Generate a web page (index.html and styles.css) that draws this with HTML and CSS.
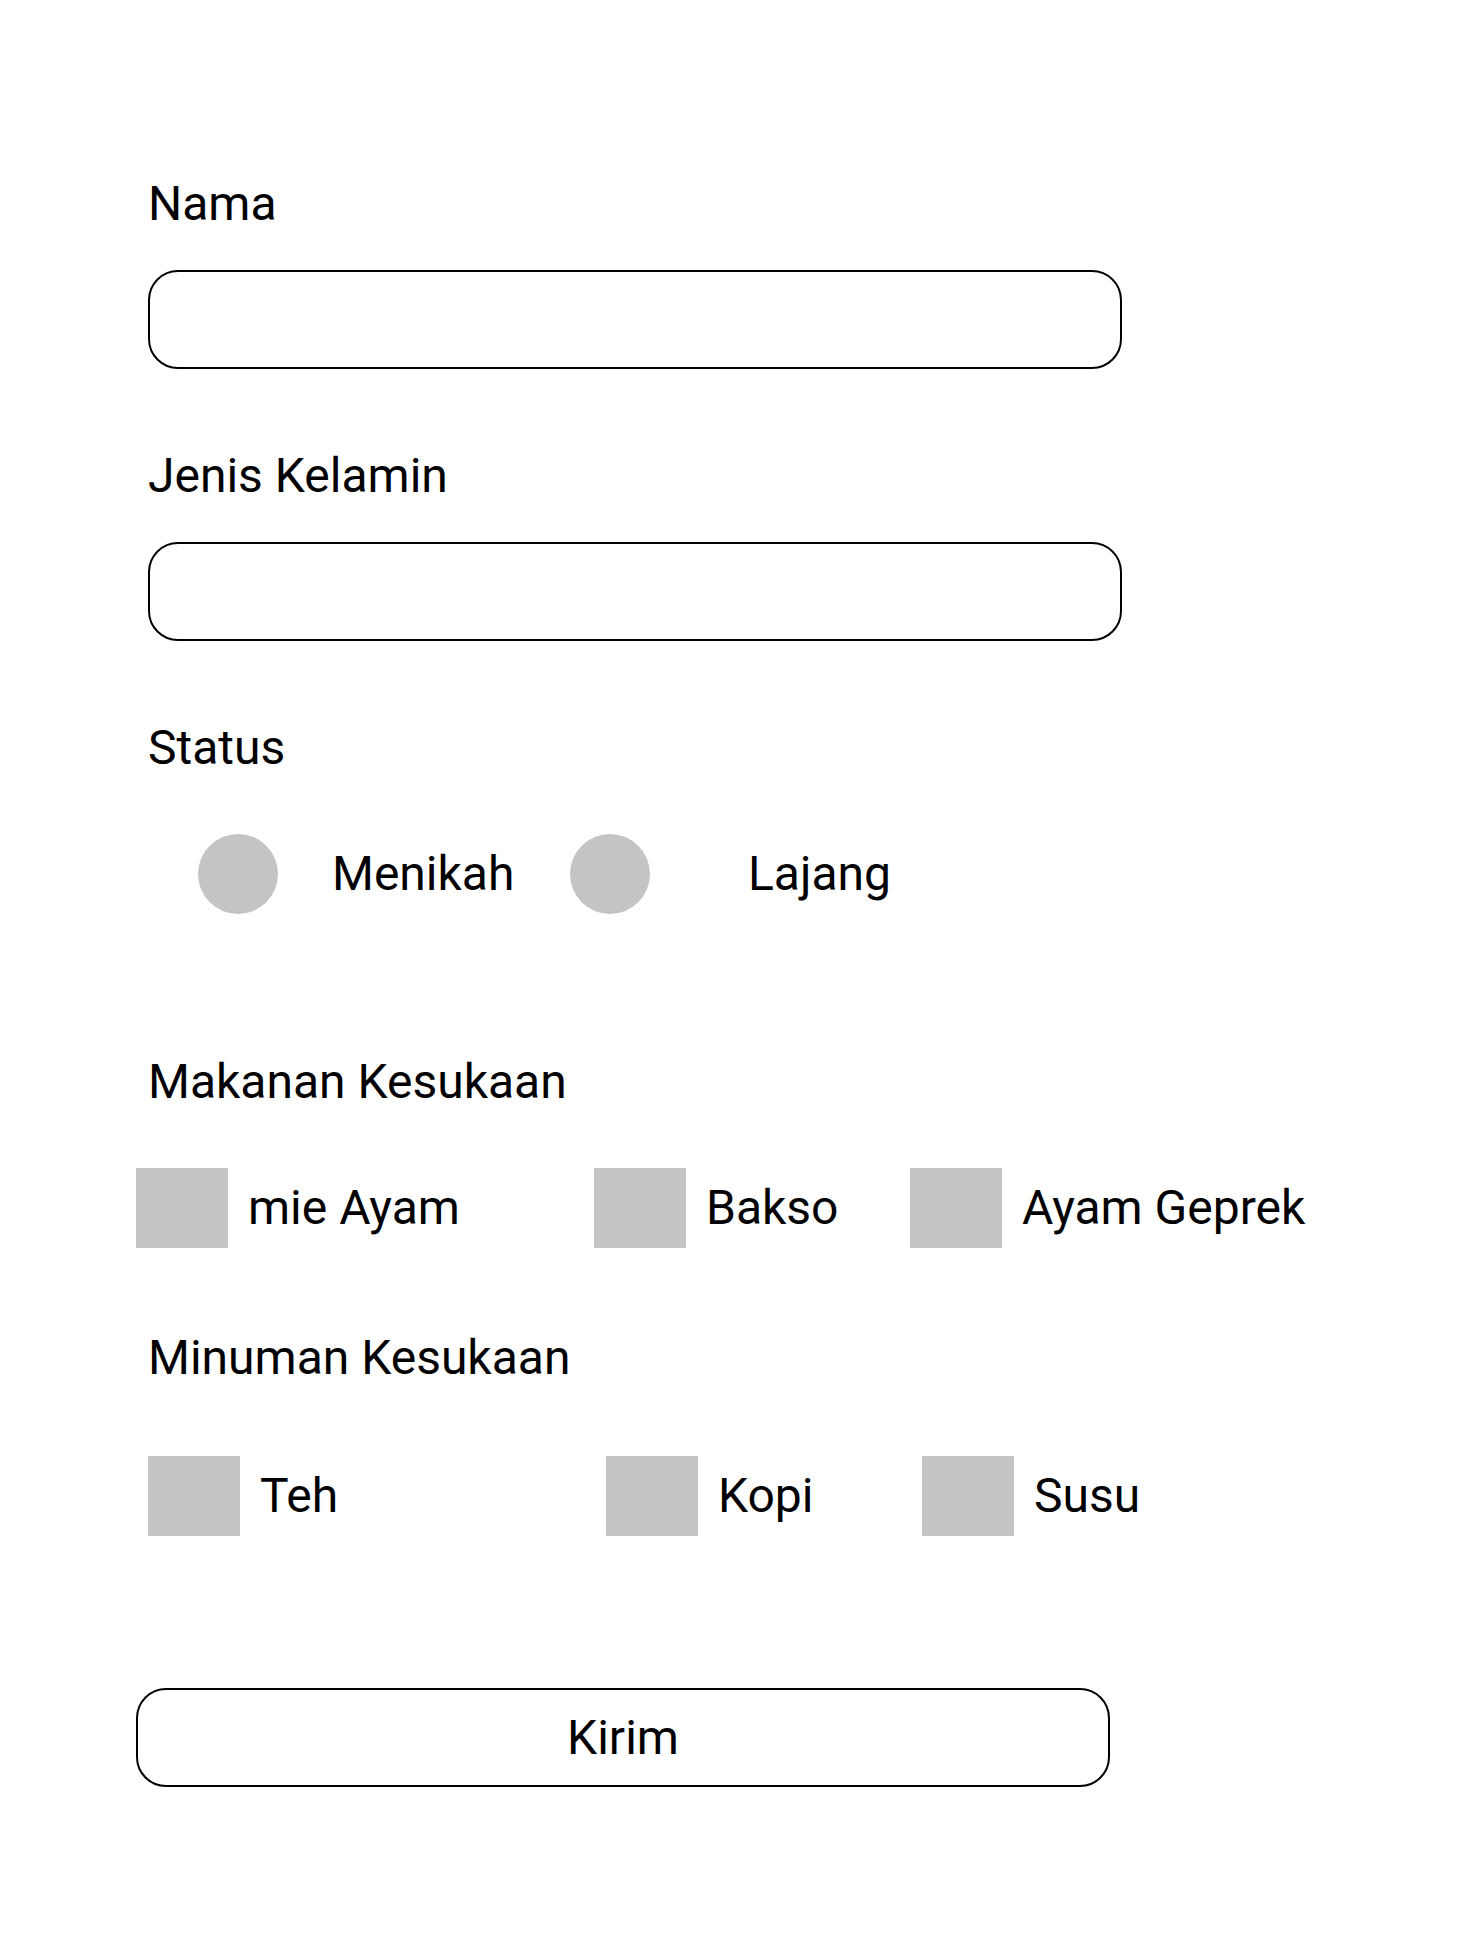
FILE: index.html
```html
<!DOCTYPE html>
<html lang="id">
<head>
<meta charset="utf-8">
<title>Form</title>
<link rel="stylesheet" href="styles.css">
</head>
<body>
<form class="form">
  <div class="label label-first">Nama</div>
  <div class="field"></div>

  <div class="label label-gap">Jenis Kelamin</div>
  <div class="field"></div>

  <div class="label label-gap">Status</div>
  <div class="radio-row">
    <div class="radio-item radio-item-1"><span class="radio"></span><span class="opt">Menikah</span></div>
    <div class="radio-item radio-item-2"><span class="radio"></span><span class="opt">Lajang</span></div>
  </div>

  <div class="label label-makanan">Makanan Kesukaan</div>
  <div class="check-row check-row-1">
    <div class="check-item"><span class="box"></span><span class="opt">mie Ayam</span></div>
    <div class="check-item"><span class="box"></span><span class="opt">Bakso</span></div>
    <div class="check-item"><span class="box"></span><span class="opt">Ayam Geprek</span></div>
  </div>

  <div class="label label-minuman">Minuman Kesukaan</div>
  <div class="check-row check-row-2">
    <div class="check-item"><span class="box"></span><span class="opt">Teh</span></div>
    <div class="check-item"><span class="box"></span><span class="opt">Kopi</span></div>
    <div class="check-item"><span class="box"></span><span class="opt">Susu</span></div>
  </div>

  <div class="submit">Kirim</div>
</form>
</body>
</html>
```
FILE: styles.css
```css
html, body {
  margin: 0;
  padding: 0;
  background: #ffffff;
}

body {
  font-family: Roboto, "Liberation Sans", sans-serif;
  font-size: 48px;
  line-height: 56px;
  color: #000000;
}

.form {
  display: flex;
  flex-direction: column;
  align-items: flex-start;
  padding: 0 0 150px 148px;
}

.label {
  height: 56px;
}

.label-first {
  margin-top: 176px;
}

.label-gap {
  margin-top: 79px;
}

.field {
  margin-top: 38px;
  width: 974px;
  height: 99px;
  box-sizing: border-box;
  border: 2px solid #000;
  border-radius: 30px;
}

.radio-row {
  margin-top: 58px;
  margin-left: 50px;
  display: grid;
  grid-template-columns: 372px auto;
  align-items: center;
}

.radio-item {
  display: flex;
  align-items: center;
}

.radio {
  width: 80px;
  height: 80px;
  border-radius: 50%;
  background: #c4c4c4;
  flex: none;
}

.radio-item-1 .opt {
  margin-left: 54px;
}

.radio-item-2 .opt {
  margin-left: 98px;
}

.label-makanan {
  margin-top: 140px;
}

.check-row {
  display: grid;
  grid-template-columns: 458px 316px auto;
  align-items: center;
}

.check-row-1 {
  margin-top: 58px;
  margin-left: -12px;
}

.check-row-2 {
  margin-top: 70px;
}

.check-item {
  display: flex;
  align-items: center;
  gap: 20px;
}

.box {
  width: 92px;
  height: 80px;
  background: #c4c4c4;
  flex: none;
}

.label-minuman {
  margin-top: 82px;
}

.submit {
  margin-top: 152px;
  margin-left: -12px;
  width: 974px;
  height: 99px;
  box-sizing: border-box;
  border: 2px solid #000;
  border-radius: 30px;
  display: flex;
  align-items: center;
  justify-content: center;
}
```
